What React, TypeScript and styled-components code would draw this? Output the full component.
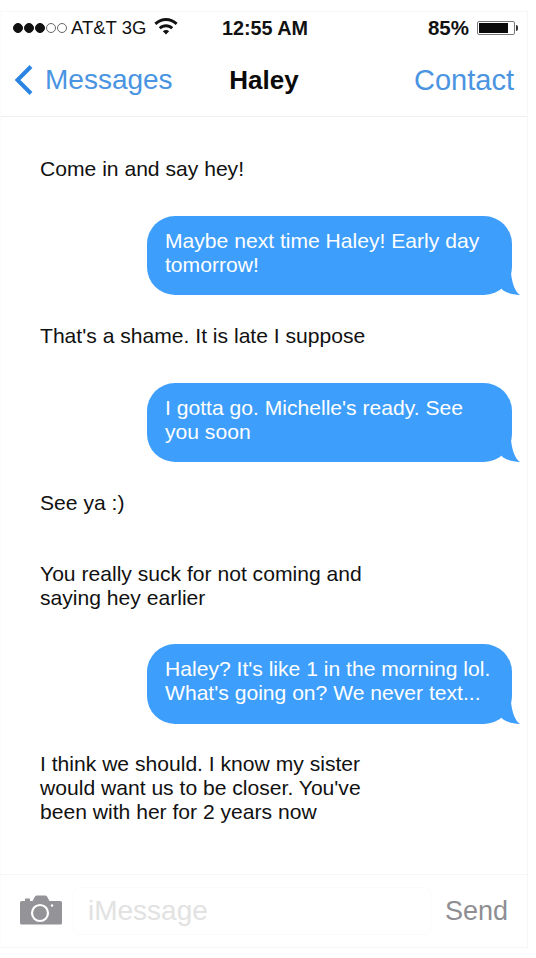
import * as React from "react"
import styled, { createGlobalStyle } from "styled-components"

const GlobalStyle = createGlobalStyle`
  html, body {
    margin: 0;
    padding: 0;
    background: #ffffff;
  }
  body {
    font-family: "Liberation Sans", Arial, sans-serif;
  }
`

const Page = styled.div`
  width: 536px;
  height: 958px;
  padding-top: 11px;
  box-sizing: border-box;
  overflow: hidden;
`

const Phone = styled.div`
  width: 528px;
  height: 937px;
  box-sizing: border-box;
  border-top: 1px solid #f8f8f8;
  border-right: 1px solid #f6f6f6;
  border-bottom: 1px solid #f6f6f6;
  border-left: 1px solid #fbfbfb;
  display: flex;
  flex-direction: column;
`

const StatusBar = styled.div`
  height: 32px;
  display: grid;
  grid-template-columns: 1fr auto 1fr;
  align-items: center;
  padding: 0 5px 0 12px;
  color: #111111;
`

const StatusLeft = styled.div`
  display: flex;
  align-items: center;
  font-size: 18.5px;
`

const Signal = styled.div`
  display: flex;
  gap: 1px;
  margin-right: 4px;
`

const Dot = styled.span<{ $on?: boolean }>`
  width: 10px;
  height: 10px;
  box-sizing: border-box;
  border-radius: 50%;
  border: 1px solid ${(p) => (p.$on ? "#111111" : "#666666")};
  background: ${(p) => (p.$on ? "#111111" : "transparent")};
`

const Clock = styled.div`
  margin-right: 5px;
  font-size: 19.8px;
  font-weight: 700;
`

const StatusRight = styled.div`
  display: flex;
  justify-content: flex-end;
  align-items: center;
  gap: 8px;
  font-size: 20.5px;
  font-weight: 700;
`

const WifiIcon = styled.svg`
  width: 26px;
  height: 19px;
  margin: -6px 0 0 7px;
`

const Battery = styled.div`
  position: relative;
  width: 38px;
  height: 14px;
  margin-right: 7px;
  box-sizing: border-box;
  border: 1px solid #777777;
  border-radius: 2px;
  padding: 1px;

  &::before {
    content: "";
    display: block;
    width: 85%;
    height: 100%;
    background: #0a0a0a;
  }

  &::after {
    content: "";
    position: absolute;
    right: -4px;
    top: 3px;
    width: 2px;
    height: 6px;
    background: #333333;
    border-radius: 0 2px 2px 0;
  }
`

const NavBar = styled.div`
  height: 73px;
  display: grid;
  grid-template-columns: 1fr auto 1fr;
  align-items: center;
  padding: 0 13px 0 13px;
  border-bottom: 1px solid #efefef;
  box-sizing: border-box;
`

const BackLink = styled.div`
  display: flex;
  align-items: center;
  gap: 11px;
  color: #4a94e2;
  font-size: 28px;
`

const Title = styled.div`
  font-size: 26px;
  font-weight: 700;
  color: #0a0a0a;
`

const ContactLink = styled.div`
  text-align: right;
  color: #4a94e2;
  font-size: 29px;
`

const Thread = styled.div`
  flex: 1;
  display: flex;
  flex-direction: column;
  padding: 40px 15px 0 39px;
`

const Incoming = styled.div<{ $gap: number }>`
  margin-top: ${(p) => p.$gap}px;
  font-size: 21.1px;
  line-height: 24px;
  color: #111111;
  white-space: pre-line;
`

const Outgoing = styled.div<{ $gap: number; $height: number }>`
  position: relative;
  align-self: flex-end;
  width: 365px;
  height: ${(p) => p.$height}px;
  margin-top: ${(p) => p.$gap}px;
  box-sizing: border-box;
  padding: 13px 10px 0 18px;
  border-radius: 28px;
  background: #3d9efc;
  color: #ffffff;
  font-size: 21.1px;
  line-height: 24px;
  white-space: pre-line;
`

const BubbleTail = styled.svg`
  position: absolute;
  right: -8px;
  bottom: 0;
  width: 22px;
  height: 22px;
`

const InputBar = styled.div`
  height: 73px;
  display: flex;
  align-items: center;
  padding: 0 19px 0 19px;
  border-top: 1px solid #f6f6f6;
  box-sizing: border-box;
`

const CameraIcon = styled.svg`
  width: 42px;
  height: 30px;
  margin-bottom: 2px;
  flex-shrink: 0;
`

const InputField = styled.div`
  flex: 1;
  height: 46px;
  margin: 0 14px 0 11px;
  padding-left: 14px;
  display: flex;
  align-items: center;
  border: 1px solid #fbfbfb;
  border-radius: 6px;
  color: #e2e2e2;
  font-size: 28px;
`

const SendButton = styled.div`
  color: #8e8e93;
  font-size: 27px;
`

type Message =
  | { from: "them"; text: string; gap: number }
  | { from: "me"; text: string; gap: number; height: number }

const messages: Message[] = [
  { from: "them", text: "Come in and say hey!", gap: 0 },
  { from: "me", text: "Maybe next time Haley! Early day\ntomorrow!", gap: 35, height: 79 },
  { from: "them", text: "That's a shame. It is late I suppose", gap: 29 },
  { from: "me", text: "I gotta go. Michelle's ready. See\nyou soon", gap: 35, height: 79 },
  { from: "them", text: "See ya :)", gap: 29 },
  { from: "them", text: "You really suck for not coming and\nsaying hey earlier", gap: 47 },
  {
    from: "me",
    text: "Haley? It's like 1 in the morning lol.\nWhat's going on? We never text...",
    gap: 34,
    height: 80,
  },
  {
    from: "them",
    text: "I think we should. I know my sister\nwould want us to be closer. You've\nbeen with her for 2 years now",
    gap: 28,
  },
]

export default function App() {
  return (
    <>
      <GlobalStyle />
      <Page>
        <Phone>
          <StatusBar>
            <StatusLeft>
              <Signal>
                <Dot $on />
                <Dot $on />
                <Dot $on />
                <Dot />
                <Dot />
              </Signal>
              AT&amp;T 3G
              <WifiIcon viewBox="0 0 24 18">
                <path d="M1 6.500C7.500 .5 16.500 .5 23 6.500l-1.800 2C15.800 3.600 8.200 3.600 2.800 8.500z" fill="#111" />
                <path d="M5.200 10.600c4-3.600 9.600-3.600 13.600 0l-1.800 2c-3-2.600-7-2.600-10 0z" fill="#111" />
                <path d="M9 14.400c1.800-1.500 4.200-1.500 6 0L12 17.600z" fill="#111" />
              </WifiIcon>
            </StatusLeft>
            <Clock>12:55 AM</Clock>
            <StatusRight>
              85%
              <Battery />
            </StatusRight>
          </StatusBar>
          <NavBar>
            <BackLink>
              <svg width="20" height="32" viewBox="0 0 20 32">
                <path d="M17 2.500 3.500 16 17 29.500" fill="none" stroke="#2b84e4" strokeWidth="4" />
              </svg>
              Messages
            </BackLink>
            <Title>Haley</Title>
            <ContactLink>Contact</ContactLink>
          </NavBar>
          <Thread>
            {messages.map((m) =>
              m.from === "me" ? (
                <Outgoing key={m.text} $gap={m.gap} $height={m.height}>
                  {m.text}
                  <BubbleTail viewBox="0 0 22 22">
                    <path d="M13 0C14 10 17 19 22 22 15 22 9 20 4.500 17L0 10z" fill="#3d9efc" />
                  </BubbleTail>
                </Outgoing>
              ) : (
                <Incoming key={m.text} $gap={m.gap}>
                  {m.text}
                </Incoming>
              ),
            )}
          </Thread>
          <InputBar>
            <CameraIcon viewBox="0 0 42 30">
              <path
                d="M5 6V3.500h5V6h2.500L15 1.500Q15.500 .5 17 .5h8Q26.500 .5 27 1.500L29.500 6H40.500Q42 6 42 7.500V28Q42 29.500 40.500 29.500H1.500Q0 29.500 0 28V7.500Q0 6 1.500 6z"
                fill="#949498"
              />
              <circle cx="20" cy="18" r="8" fill="none" stroke="#ffffff" strokeWidth="2.200" />
              <circle cx="32" cy="10.500" r="1.200" fill="#ffffff" />
            </CameraIcon>
            <InputField>iMessage</InputField>
            <SendButton>Send</SendButton>
          </InputBar>
        </Phone>
      </Page>
    </>
  )
}
